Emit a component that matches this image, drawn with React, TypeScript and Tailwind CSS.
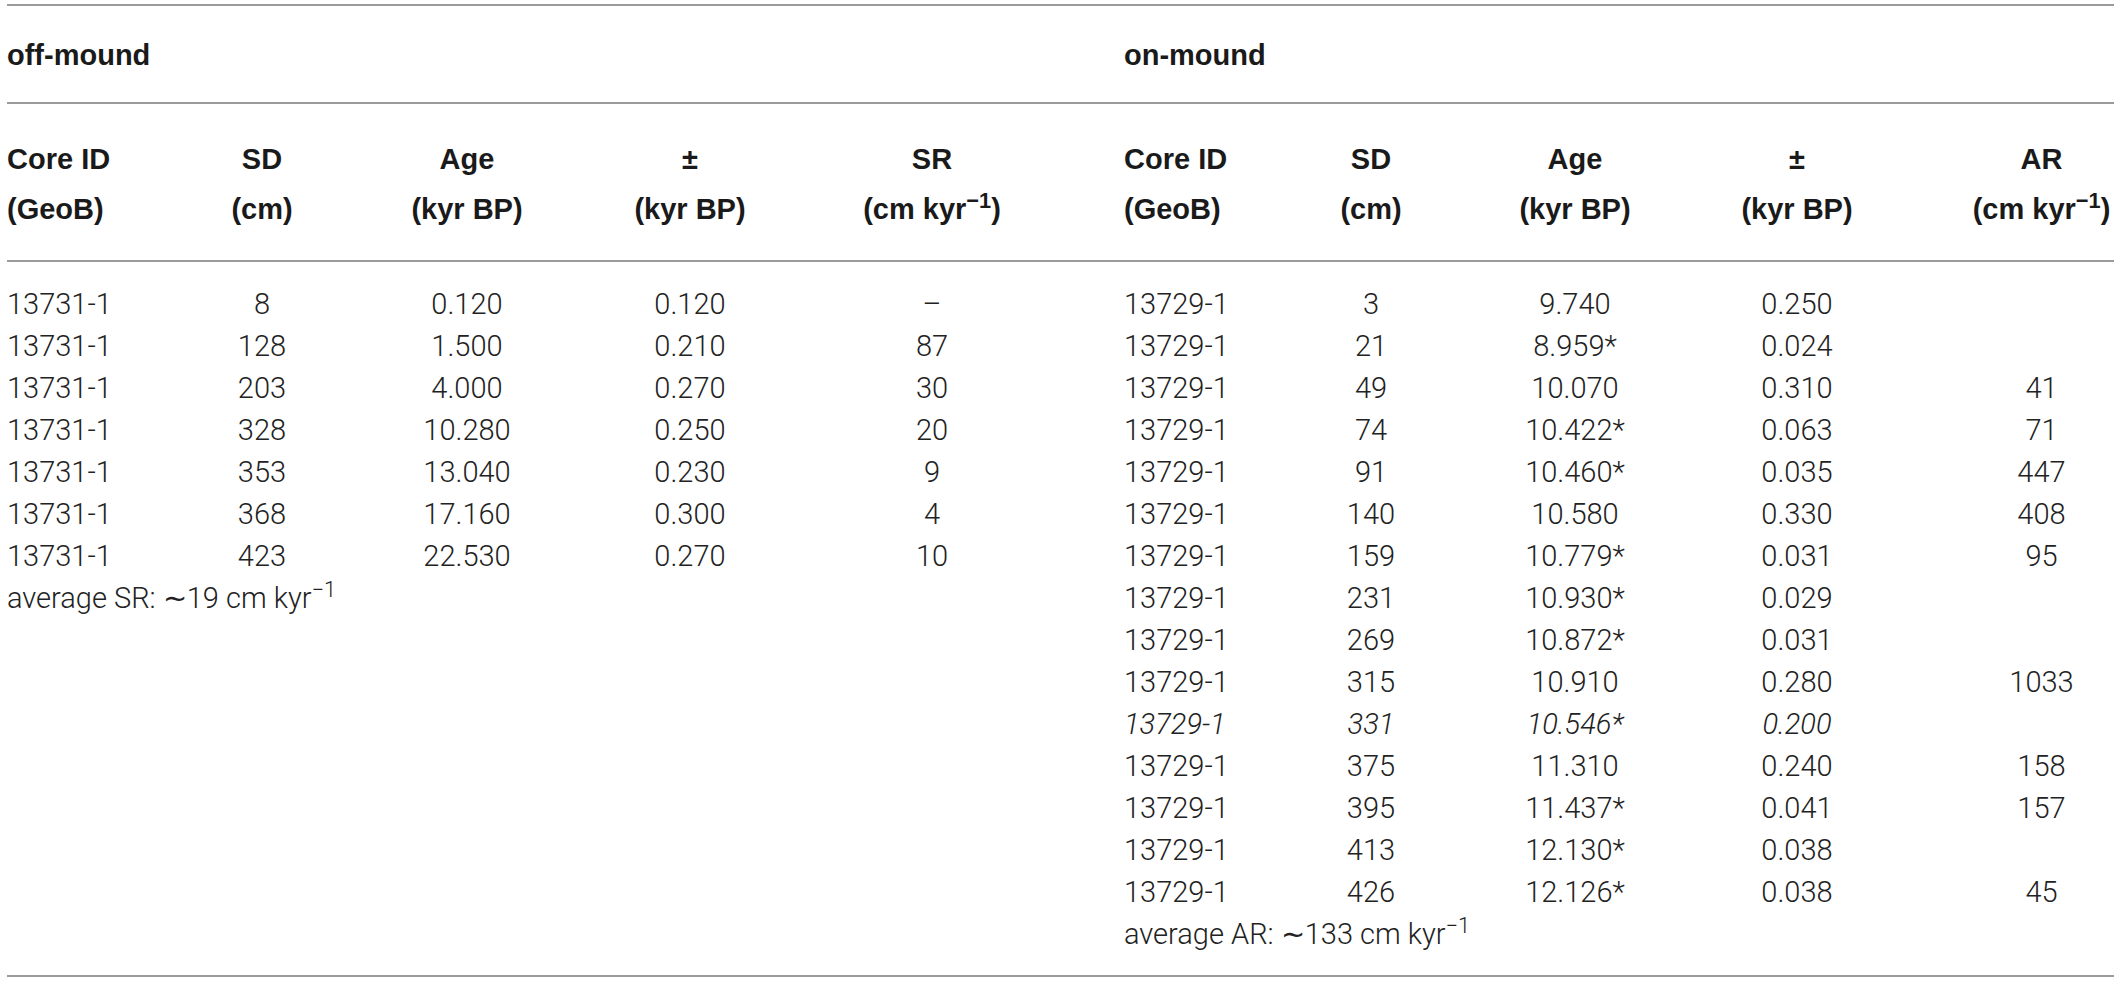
const cols = "grid grid-cols-[160px_190px_220px_226px_321px_163px_168px_240px_204px_215px]";

const offRows = [
  ["13731-1", "8", "0.120", "0.120", "–"],
  ["13731-1", "128", "1.500", "0.210", "87"],
  ["13731-1", "203", "4.000", "0.270", "30"],
  ["13731-1", "328", "10.280", "0.250", "20"],
  ["13731-1", "353", "13.040", "0.230", "9"],
  ["13731-1", "368", "17.160", "0.300", "4"],
  ["13731-1", "423", "22.530", "0.270", "10"],
];

const onRows = [
  ["13729-1", "3", "9.740", "0.250", ""],
  ["13729-1", "21", "8.959*", "0.024", ""],
  ["13729-1", "49", "10.070", "0.310", "41"],
  ["13729-1", "74", "10.422*", "0.063", "71"],
  ["13729-1", "91", "10.460*", "0.035", "447"],
  ["13729-1", "140", "10.580", "0.330", "408"],
  ["13729-1", "159", "10.779*", "0.031", "95"],
  ["13729-1", "231", "10.930*", "0.029", ""],
  ["13729-1", "269", "10.872*", "0.031", ""],
  ["13729-1", "315", "10.910", "0.280", "1033"],
  ["13729-1", "331", "10.546*", "0.200", ""],
  ["13729-1", "375", "11.310", "0.240", "158"],
  ["13729-1", "395", "11.437*", "0.041", "157"],
  ["13729-1", "413", "12.130*", "0.038", ""],
  ["13729-1", "426", "12.126*", "0.038", "45"],
];

const leftAlign = ["text-left", "text-center", "text-center", "text-center", "text-center pr-[63px]"];
const rightAlign = ["text-left", "text-center", "text-center", "text-center", "text-center pl-[70px]"];

function Unit() {
  return (
    <>
      (cm kyr<sup>−1</sup>)
    </>
  );
}

function Head({ top, bottom, cls }: { top: React.ReactNode; bottom: React.ReactNode; cls: string }) {
  return (
    <div className={cls}>
      <div>{top}</div>
      <div>{bottom}</div>
    </div>
  );
}

export default function App() {
  const body = [];
  for (let i = 0; i < 16; i++) {
    const off = offRows[i];
    const on = onRows[i];
    if (off) {
      off.forEach((v, j) => body.push(<div key={`o${i}${j}`} className={leftAlign[j]}>{v}</div>));
    } else if (i === 7) {
      body.push(
        <div key="avgsr" className="col-span-5 text-left">
          average SR: ∼19 cm kyr<sup>−1</sup>
        </div>
      );
    } else {
      body.push(<div key={`e${i}`} className="col-span-5" />);
    }
    if (on) {
      const italic = i === 10 ? "italic" : "";
      on.forEach((v, j) => body.push(<div key={`n${i}${j}`} className={`${rightAlign[j]} ${italic}`}>{v}</div>));
    } else {
      body.push(
        <div key="avgar" className="col-span-5 text-left">
          average AR: ∼133 cm kyr<sup>−1</sup>
        </div>
      );
    }
  }

  return (
    <div className="min-h-[982px] w-[2120px] bg-white text-[#222]">
      <div className="ml-[7px] mt-[4px] w-[2107px] border-y-2 border-[#9a9a9a]">
        <div className={`${cols} h-[98px] items-center border-b-2 border-[#9a9a9a] pt-[3px] font-['Liberation_Sans',sans-serif] text-[29px] font-bold text-[#1a1a1a]`}>
          <div className="col-span-5">off-mound</div>
          <div className="col-span-5">on-mound</div>
        </div>
        <div className={`${cols} border-b-2 border-[#9a9a9a] pt-[30px] pb-[26px] font-['Liberation_Sans',sans-serif] text-[29px] leading-[50px] font-bold text-[#1a1a1a]`}>
          <Head cls={leftAlign[0]} top="Core ID" bottom="(GeoB)" />
          <Head cls={leftAlign[1]} top="SD" bottom="(cm)" />
          <Head cls={leftAlign[2]} top="Age" bottom="(kyr BP)" />
          <Head cls={leftAlign[3]} top="±" bottom="(kyr BP)" />
          <Head cls={leftAlign[4]} top="SR" bottom={<Unit />} />
          <Head cls={rightAlign[0]} top="Core ID" bottom="(GeoB)" />
          <Head cls={rightAlign[1]} top="SD" bottom="(cm)" />
          <Head cls={rightAlign[2]} top="Age" bottom="(kyr BP)" />
          <Head cls={rightAlign[3]} top="±" bottom="(kyr BP)" />
          <Head cls={rightAlign[4]} top="AR" bottom={<Unit />} />
        </div>
        <div className={`${cols} auto-rows-[42px] items-center pt-[21px] pb-[20px] font-['Roboto',sans-serif] text-[29px] font-light leading-[42px]`}>
          {body}
        </div>
      </div>
    </div>
  );
}
